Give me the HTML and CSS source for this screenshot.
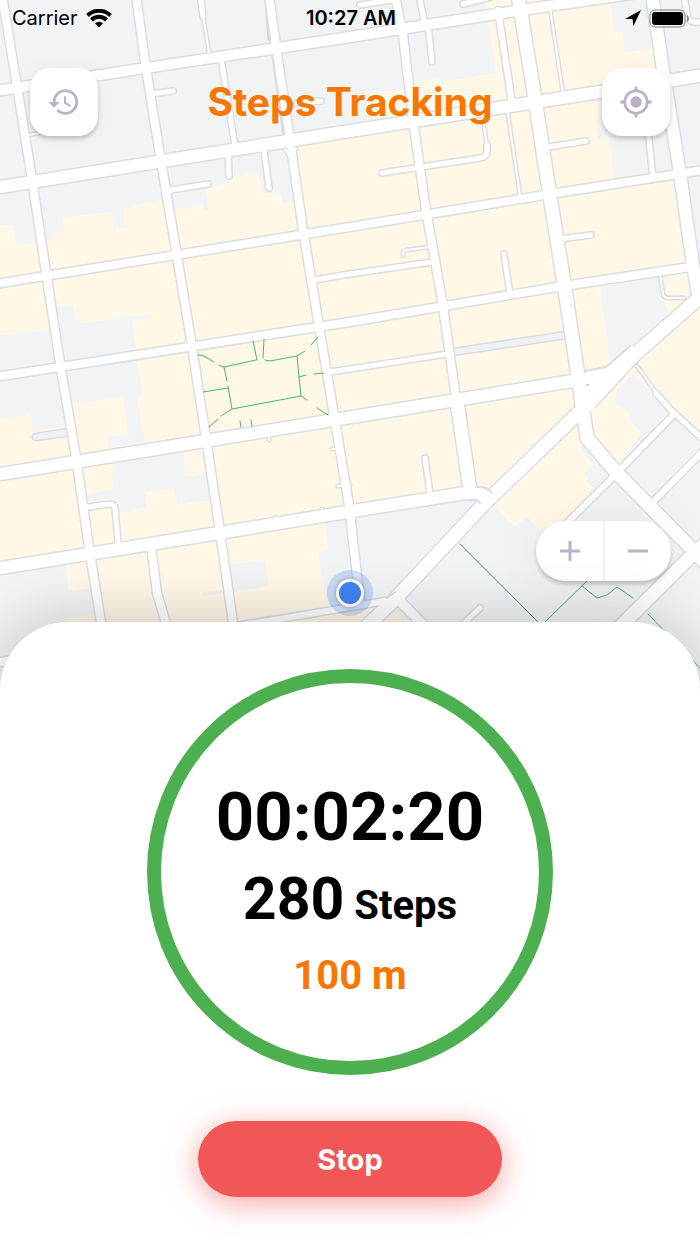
FILE: index.html
```html
<!DOCTYPE html>
<html lang="en">
<head>
    <meta charset="UTF-8">
    <meta name="viewport" content="width=device-width, initial-scale=1.0">
    <title>Steps Tracking</title>
    <link rel="stylesheet" href="styles.css">
</head>
<body>
    <section class="map">
        <svg class="map-canvas" viewBox="0 0 700 700" preserveAspectRatio="xMidYMin slice" aria-hidden="true">
            <defs>
                <g id="roads">
                    <!-- streets, west to east -->
                    <path class="w11" d="M-5 91L350 37L528 9L700 -16"/>
                    <path class="w12" d="M-5 188L350 131L600 92L710 74"/>
                    <path class="w8" d="M-5 284L350 227L557 193L710 169"/>
                    <path class="w8" d="M-5 377L350 322L557 287L690 267"/>
                    <path class="w12" d="M-5 475L205 441L450 401L572 381L600 379"/>
                    <path class="w12" d="M-5 569L219 533L353 511L465 493L482 494"/>
                    <path class="w7" d="M225 628L333 610L385 601"/>
                    <path class="w8" d="M-5 663L30 657"/>
                    <path class="w6" d="M314 280L350 274L432 262"/>
                    <path class="w6" d="M330 372L350 369L447 354"/>
                    <!-- avenues, north to south -->
                    <path class="w8" d="M2 -5L16 80L31 173L46 272L60 363L76 457L89 547L101 622L110 690"/>
                    <path class="w8" d="M136 -5L145 62L160 155L176 250L191 340L205 432L219 525L234 630"/>
                    <path class="w8" d="M269 -5L277 53L289 133L303 230L318 320L334 415L349 505L360 602"/>
                    <path class="w8" d="M395 -5L403 35L414 127L426 210L442 300L456 398"/>
                    <path class="w13" d="M457 402L470 490"/>
                    <path class="w6" d="M419 -5L425 25"/>
                    <path class="w13" d="M518 -5L534 93L549 190L564 283L578 376L582 405L587 438L617 473L690 547L712 570"/>
                    <path class="w7" d="M498 10L512 103"/>
                    <path class="w12" d="M652 -5L663 70L679 167L693 265L699 300"/>
                    <path class="w6" d="M221 58L235 146"/>
                    <path class="w6" d="M648 130L653 178"/>
                    <!-- diagonal avenue and its side streets -->
                    <path class="w14" d="M708 290L632 357L597 395L483 505L397 597L365 628"/>
                    <path class="w7" d="M674 414L617 473L567 523"/>
                    <path class="w7" d="M706 448L652 503"/>
                    <path class="w14" d="M712 537L687 560L618 629"/>
                    <path class="w6" d="M656 393L672 411L706 442"/>
                    <path class="w9" d="M397 598L428 630"/>
                    <!-- alleys -->
                    <path class="w8" d="M151 545L157 593L168 630"/>
                    <path class="w6" d="M88 507L110 504Q114 504 115 508L118 542"/>
                    <path class="w6" d="M228 153L229 176M264 150L269 188M200 -5L203 16M150 94L173 91M165 191L208 184M297 103L321 101M428 24L432 62"/>
                    <path class="w6" d="M487 145L487 151Q487 157 480 158L382 173M548 147L586 141M560 239L591 235M504 254L510 294M491 -3L463 4"/>
                    <path class="w6" d="M425 458L430 494M463 624L480 608M684 -4L688 18Q690 23 702 22M360 5L392 0"/>
                    <path class="w3" d="M203 16L209 52M550 8L563 94M507 108L520 195M483 120L487 146M28 135L45 132"/>
                    <path class="w3" d="M403 256L403 253Q403 251 406 250L430 247M660 274L663 294Q664 298 669 298L684 298M637 366L657 394"/>
                    <path class="w3" d="M269 432L269 440M276 522L276 517M322 514L322 509M332 449L338 448M338 486L350 485M285 150L290 156L296 149M18 91L25 137"/>
                </g>
            </defs>

            <rect class="land" width="700" height="700"/>
            <g class="blocks">
                <path d="M0 225L13 225L16 246L42 242L52 240L52 232L64 229L63 217L112 212L113 230L125 227L123 208L163 200L173 209L203 204L204 211L209 210L205 190L225 184L235 176L258 172L262 192L280 194L283 203L293 202L290 143L373 130V93L415 87L417 80L440 77L441 82L496 73L485 0H603L611 7L614 32L622 32L625 53L652 48L662 86L597 95V128L598 139L610 138L614 184L680 173L697 300L610 370L700 290V440L672 413L640 436L617 465L593 440L580 447L593 465L585 473L588 478L587 482L595 490L565 520L540 530L527 517L515 527L497 509L480 494L325 522L328 549L318 552L325 593L333 612L390 600L360 640H0Z"/>
                <path d="M385 622L394 613L410 622V640H380Z"/>
            </g>
            <g class="lots">
                <path d="M0 566L65 564L69 591L90 588L94 614L65 619V700H0Z"/>
                <path d="M112 463L183 452L186 477L206 474L210 500L178 505L174 488L145 492L147 507L121 513L118 497L88 502L87 494L114 489Z"/>
                <path d="M57 307L73 305L76 324L107 320L132 316L152 315V318L132 321L136 348L137 360L143 397L137 398L144 442L109 448L108 437L128 434L124 397L75 404L66 400Z"/>
                <path d="M0 335L8 335L49 330L68 425L33 431L30 414L0 419Z"/>
                <path d="M230 565L265 560L268 586L233 592L203 596V592L230 589Z"/>
                <path d="M600 287L660 277L668 280L664 298L668 312L640 345L610 362Z"/>
                <path d="M615 392L635 372L638 378L653 393L668 412L643 435L630 420L627 410L616 404Z"/>
                <path d="M676 90L700 80V260L690 200Z"/>
                <path d="M353 516L470 497L482 502L385 600L361 598Z"/>
            </g>
            <path class="alley-edge" d="M453 352L566 335M36 437L70 432"/>
            <path class="alley" d="M453 352L566 335M36 437L70 432"/>
            <path class="wall" d="M273 56L284 135M266 0L269 40"/>

            <use href="#roads" class="casing"/>
            <use href="#roads" class="surface"/>
            <path class="junction" d="M585 372L606 368L632 346L646 352L600 398L592 412L578 400Z"/>
            <path class="junction-edge" d="M585 371L606 367L630 346M476 487Q487 486 492 493M470 500Q478 499 480 503M387 598L395 592"/>
            <path class="island" d="M586 384L590 384L587 387Z"/>

            <path class="parkway" d="M198 355L204 356L214 362M219 365L224 367L256 360M265 360L270 361L297 356L305 351M311 345L318 337M253 341L257 360M264 339L263 358M224 367L227 381M228 386L232 409L301 396L299 377L297 356M203 392L228 388M299 377L306 375M314 374L324 373M301 396L307 400M317 408L328 415M232 409L221 416M218 419L209 427M240 421L241 427M251 420L252 426"/>
            <path class="parkway" d="M460 544L540 624M543 624L587 581M582 586L597 598L607 595L617 587L633 598M648 614L702 670"/>

            <circle class="here-halo" cx="350" cy="593" r="23"/>
            <circle class="here-ring" cx="350" cy="593" r="14"/>
            <circle class="here-dot" cx="350" cy="593" r="11"/>
        </svg>

        <div class="status-bar">
            <div class="carrier">
                <span>Carrier</span>
                <svg class="wifi" viewBox="0 0 26 19" aria-hidden="true">
                    <path d="M1.500 6.500A16.500 16.500 0 0 1 24.500 6.500M5.500 11A10.500 10.500 0 0 1 20.500 11"/>
                    <path class="wifi-dot" d="M13 18.500L9 14.300A6 6 0 0 1 17 14.300Z"/>
                </svg>
            </div>
            <time class="clock">10:27 AM</time>
            <div class="indicators">
                <svg class="arrow" viewBox="0 0 16 16" aria-hidden="true"><path d="M16 0L0 9H7.500L8.500 16Z"/></svg>
                <svg class="battery" viewBox="0 0 41 19" aria-hidden="true">
                    <rect class="shell" x="1" y="1" width="35" height="17" rx="5"/>
                    <rect x="3" y="3" width="31" height="13" rx="3"/>
                    <path class="cap" d="M38 6Q40 7 40 9.500Q40 12 38 13Z"/>
                </svg>
            </div>
        </div>

        <header class="top-bar">
            <button class="icon-button" type="button" aria-label="History">
                <svg viewBox="0 0 24 24"><path d="M13 3a9 9 0 0 0-9 9H1l3.890 3.890.07.14L9 12H6c0-3.870 3.130-7 7-7s7 3.130 7 7-3.130 7-7 7c-1.930 0-3.680-.79-4.940-2.060l-1.420 1.420A8.954 8.954 0 0 0 13 21a9 9 0 0 0 0-18zm-1 5v5l4.280 2.540.72-1.210-3.500-2.080V8H12z"/></svg>
            </button>
            <h1>Steps Tracking</h1>
            <button class="icon-button" type="button" aria-label="My location">
                <svg viewBox="0 0 24 24"><path d="M20.940 11A8.994 8.994 0 0 0 13 3.060V1h-2v2.060A8.994 8.994 0 0 0 3.060 11H1v2h2.060A8.994 8.994 0 0 0 11 20.940V23h2v-2.060A8.994 8.994 0 0 0 20.940 13H23v-2h-2.060zM12 19a7 7 0 1 1 0-14 7 7 0 0 1 0 14z"/><circle cx="12" cy="12" r="4"/></svg>
            </button>
        </header>

        <div class="zoom">
            <button type="button" aria-label="Zoom in">
                <svg viewBox="0 0 20 20"><path d="M10 0V20M0 10H20"/></svg>
            </button>
            <button type="button" aria-label="Zoom out">
                <svg viewBox="0 0 20 20"><path d="M0 10H20"/></svg>
            </button>
        </div>
    </section>

    <main class="sheet">
        <div class="ring">
            <p class="timer">00:02:20</p>
            <p class="steps"><strong>280</strong> Steps</p>
            <p class="distance">100 m</p>
        </div>
        <button class="stop" type="button">Stop</button>
    </main>
</body>
</html>
```

FILE: styles.css
```css
* {
    box-sizing: border-box;
}
body {
    margin: 0;
    min-height: 100vh;
    display: flex;
    flex-direction: column;
    background-color: white;
    color: black;
    font-family: Inter, "Liberation Sans", sans-serif;
    overflow-x: hidden;
}
h1, p {
    margin: 0;
}
button {
    border: none;
    padding: 0;
    font-family: inherit;
    cursor: pointer;
}

/* Map */
.map {
    position: relative;
    flex: 1 0 0;
    display: flex;
    flex-direction: column;
}
.map-canvas {
    position: absolute;
    top: 0;
    left: 0;
    width: 100%;
    height: calc(100% + 78px);
}
.land, .lots {
    fill: #f1f3f5;
}
.blocks {
    fill: #fff8e7;
}
#roads path {
    fill: none;
    stroke-linecap: round;
    stroke-linejoin: round;
}
.casing {
    --edge: 3px;
    stroke: #dcdde1;
}
.surface {
    --edge: 0px;
    stroke: white;
}
#roads .w3 { stroke-width: calc(2px + var(--edge)); }
#roads .w6 { stroke-width: calc(5px + var(--edge)); }
#roads .w7 { stroke-width: calc(6px + var(--edge)); }
#roads .w8 { stroke-width: calc(8px + var(--edge)); }
#roads .w9 { stroke-width: calc(9px + var(--edge)); }
#roads .w11 { stroke-width: calc(10px + var(--edge)); }
#roads .w12 { stroke-width: calc(12px + var(--edge)); }
#roads .w13 { stroke-width: calc(13px + var(--edge)); }
#roads .w14 { stroke-width: calc(13px + var(--edge)); }
.alley-edge, .alley, .wall, .junction-edge, .parkway {
    fill: none;
    stroke-linecap: round;
}
.alley-edge {
    stroke: #dcdde1;
    stroke-width: 9px;
}
.alley {
    stroke: #f0f1f4;
    stroke-width: 6px;
}
.wall {
    stroke: #d4d6da;
    stroke-width: 3px;
}
.junction {
    fill: white;
}
.junction-edge {
    stroke: #dcdde1;
    stroke-width: 2px;
}
.island {
    fill: #cfd1d6;
}
.parkway {
    stroke: #4db56f;
    stroke-width: 1px;
}
.here-halo {
    fill: #4285f4;
    fill-opacity: .24;
}
.here-ring {
    fill: white;
    filter: drop-shadow(0 0 2px rgba(0, 0, 0, .3));
}
.here-dot {
    fill: #3f83f2;
}

/* Status bar */
.status-bar {
    position: relative;
    display: grid;
    grid-template-columns: 1fr auto 1fr;
    align-items: center;
    height: 36px;
    padding: 0 10px 0 12px;
    font-size: 20px;
}
.carrier, .indicators {
    display: flex;
    align-items: center;
    gap: 8px;
}
.indicators {
    justify-content: flex-end;
}
.clock {
    font-weight: 600;
}
.wifi {
    width: 26px;
    height: 19px;
    fill: none;
    stroke: black;
    stroke-width: 4px;
}
.wifi-dot {
    fill: black;
    stroke: none;
}
.arrow {
    width: 16px;
    height: 16px;
}
.battery {
    width: 41px;
    height: 19px;
}
.shell {
    fill: none;
    stroke: #7d7d7f;
    stroke-width: 1px;
}
.cap {
    fill: #7d7d7f;
}

/* Title and map controls */
.top-bar {
    position: relative;
    display: flex;
    justify-content: space-between;
    align-items: center;
    padding: 32px 30px 0;
}
.top-bar h1 {
    color: #f77700;
    font-size: 39px;
    font-weight: 700;
    line-height: 48px;
}
.icon-button {
    display: flex;
    align-items: center;
    justify-content: center;
    width: 68px;
    height: 68px;
    border-radius: 20px;
    background-color: white;
    box-shadow: 0 3px 4px rgba(0, 0, 0, .2), 0 0 24px rgba(0, 0, 0, .04);
}
.icon-button svg {
    width: 34px;
    height: 34px;
    fill: #bdb1c6;
}
.zoom {
    position: absolute;
    right: 29px;
    bottom: 41px;
    display: flex;
    border-radius: 30px;
    background-color: white;
    box-shadow: 0 3px 4px rgba(0, 0, 0, .2), 0 0 60px rgba(0, 0, 0, .06);
}
.zoom button {
    display: flex;
    align-items: center;
    justify-content: center;
    width: 67px;
    height: 60px;
    background: none;
}
.zoom button + button {
    width: 68px;
    border-left: 2px solid #f1f1f1;
}
.zoom svg {
    width: 20px;
    height: 20px;
    stroke: #bdb1c6;
    stroke-width: 3px;
}

/* Bottom sheet */
.sheet {
    position: relative;
    flex: 1 0 0;
    display: flex;
    flex-direction: column;
    align-items: center;
    justify-content: space-evenly;
    border-radius: 68px 68px 0 0;
    background-color: white;
    box-shadow: 0 0 60px rgba(0, 0, 0, .22);
    font-family: Roboto, "Liberation Sans", sans-serif;
}
.ring {
    display: flex;
    flex-direction: column;
    align-items: center;
    justify-content: center;
    gap: 6px;
    width: 406px;
    max-width: 90%;
    aspect-ratio: 1;
    padding-top: 38px;
    border: 14px solid #4caf50;
    border-radius: 50%;
    font-weight: 700;
}
.timer {
    font-size: 67px;
    line-height: 80px;
}
.steps {
    font-size: 40px;
    line-height: 72px;
}
.steps strong {
    font-size: 59px;
    font-weight: 700;
}
.distance {
    color: #f77700;
    font-size: 40px;
    line-height: 56px;
}
.stop {
    width: 304px;
    max-width: 90%;
    height: 76px;
    border-radius: 38px;
    background-color: #f15757;
    box-shadow: 0 6px 30px rgba(241, 87, 87, .55);
    color: white;
    font-family: Inter, "Liberation Sans", sans-serif;
    font-size: 29px;
    font-weight: 700;
}
```
